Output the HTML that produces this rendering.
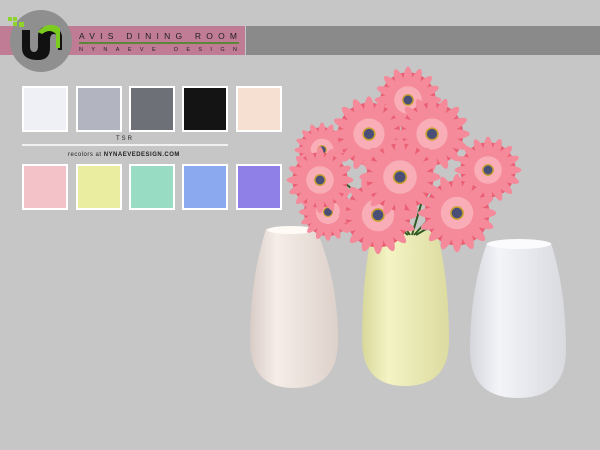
<!DOCTYPE html>
<html><head><style>
body{margin:0;width:600px;height:450px;background:#c6c6c6;overflow:hidden;position:relative;font-family:"Liberation Sans",sans-serif}
.sw{position:absolute;width:42px;height:42px;border:2px solid #fff;box-sizing:content-box}
</style></head><body>
<div style="position:absolute;left:0;top:26px;width:245px;height:29px;background:#c07c95"></div>
<div style="position:absolute;left:246px;top:26px;width:354px;height:29px;background:#8a8a8a"></div>
<svg style="position:absolute;left:0;top:0" width="600" height="450">
<defs>
<linearGradient id="g1" x1="0" x2="1"><stop offset="0" stop-color="#d8ccc6"/><stop offset=".3" stop-color="#f6ede8"/><stop offset="1" stop-color="#ddd1ca"/></linearGradient>
<linearGradient id="g2" x1="0" x2="1"><stop offset="0" stop-color="#d8d79a"/><stop offset=".3" stop-color="#f4f4c4"/><stop offset="1" stop-color="#dcdba0"/></linearGradient>
<linearGradient id="g3" x1="0" x2="1"><stop offset="0" stop-color="#d4d6dc"/><stop offset=".3" stop-color="#f3f4f8"/><stop offset="1" stop-color="#d8dadf"/></linearGradient>
<g id="d">
<circle r="24" fill="#ea5f73"/>
<g fill="#f58a9a">
<ellipse cx="0" cy="-15" rx="4" ry="14"/><ellipse cx="0" cy="-15" rx="4" ry="14" transform="rotate(22)"/><ellipse cx="0" cy="-15" rx="4" ry="14" transform="rotate(45)"/><ellipse cx="0" cy="-15" rx="4" ry="14" transform="rotate(67)"/><ellipse cx="0" cy="-15" rx="4" ry="14" transform="rotate(90)"/><ellipse cx="0" cy="-15" rx="4" ry="14" transform="rotate(112)"/><ellipse cx="0" cy="-15" rx="4" ry="14" transform="rotate(135)"/><ellipse cx="0" cy="-15" rx="4" ry="14" transform="rotate(157)"/><ellipse cx="0" cy="-15" rx="4" ry="14" transform="rotate(180)"/><ellipse cx="0" cy="-15" rx="4" ry="14" transform="rotate(202)"/><ellipse cx="0" cy="-15" rx="4" ry="14" transform="rotate(225)"/><ellipse cx="0" cy="-15" rx="4" ry="14" transform="rotate(247)"/><ellipse cx="0" cy="-15" rx="4" ry="14" transform="rotate(270)"/><ellipse cx="0" cy="-15" rx="4" ry="14" transform="rotate(292)"/><ellipse cx="0" cy="-15" rx="4" ry="14" transform="rotate(315)"/><ellipse cx="0" cy="-15" rx="4" ry="14" transform="rotate(337)"/>
</g>
<circle r="12" fill="#fbc4cc" opacity=".6"/>
<circle r="4.5" fill="#4a4f78" stroke="#c8a030" stroke-width="1.2"/>
</g>
</defs>
<circle cx="41" cy="41" r="31" fill="#8f8f8f"/>
<path d="M22 30 V48 Q22 60 38 60 Q50 60 50 48 V40 Q50 34 54 34 Q58 34 58 40 V50 H62 V36 Q60 26 50 26 Q38 26 38 36 V46 Q38 52 34 52 Q30 52 30 46 V30 Z" fill="#111"/>
<path d="M38 32 Q48 20 60 28 V48 H56 V34 Q50 28 42 34 Z" fill="#7bcc1f"/>
<rect x="8" y="17" width="4" height="4" fill="#8fd42a"/><rect x="13" y="17" width="4" height="4" fill="#8fd42a"/><rect x="13" y="22" width="4" height="4" fill="#8fd42a"/><rect x="19" y="22" width="5" height="5" fill="#8fd42a"/>
<line x1="79" y1="43" x2="239" y2="43" stroke="#3a8a1a" stroke-width="1.5"/>
<text x="79" y="39" font-size="8.5" textLength="158" lengthAdjust="spacing" fill="#222">AVIS DINING ROOM</text>
<text x="79" y="51" font-size="5.5" textLength="158" lengthAdjust="spacing" fill="#222">NYNAEVE DESIGN</text>
<line x1="22" y1="145" x2="228" y2="145" stroke="#fff" stroke-width="1.5"/>
<text x="116" y="140" font-size="6" letter-spacing="2" fill="#222">TSR</text>
<text x="68" y="156" font-size="6" letter-spacing="0.5" fill="#222">recolors at <tspan font-weight="bold">NYNAEVEDESIGN.COM</tspan></text>
<path d="M266 229 Q290 224 316 229 Q338 280 338 340 Q338 388 294 388 Q250 388 250 340 Q250 280 266 229Z" fill="url(#g1)"/>
<ellipse cx="291" cy="230" rx="24" ry="4" fill="#fffaf5"/>
<path d="M372 232 Q404 227 437 232 Q449 280 449 340 Q449 386 405 386 Q362 386 362 340 Q362 280 372 232Z" fill="url(#g2)"/>
<path d="M487 243 Q518 236 551 243 Q566 290 566 350 Q566 398 518 398 Q470 398 470 350 Q470 290 487 243Z" fill="url(#g3)"/>
<ellipse cx="519" cy="244" rx="32" ry="5" fill="#fbfbfd"/>
<g stroke="#2f5a22" stroke-width="2" fill="none">
<path d="M410 235 L370 175"/><path d="M412 235 L440 140"/><path d="M414 235 L470 175"/><path d="M408 235 L335 175"/><path d="M416 235 L458 210"/>
</g>
<use href="#d" transform="translate(328,212) scale(1)"/>
<use href="#d" transform="translate(322,150) scale(0.95)"/>
<use href="#d" transform="translate(488,170) scale(1.15)"/>
<use href="#d" transform="translate(408,100) scale(1.15)"/>
<use href="#d" transform="translate(320,180) scale(1.15)"/>
<use href="#d" transform="translate(432,134) scale(1.3)"/>
<use href="#d" transform="translate(369,134) scale(1.3)"/>
<use href="#d" transform="translate(457,213) scale(1.35)"/>
<use href="#d" transform="translate(378,215) scale(1.35)"/>
<use href="#d" transform="translate(400,177) scale(1.4)"/>
</svg>
<div class="sw" style="left:22px;top:86px;background:#eef0f6"></div>
<div class="sw" style="left:76px;top:86px;background:#b2b5bf"></div>
<div class="sw" style="left:129px;top:86px;background:#6e7077"></div>
<div class="sw" style="left:182px;top:86px;background:#141414"></div>
<div class="sw" style="left:236px;top:86px;background:#f5e0d2"></div>
<div class="sw" style="left:22px;top:164px;background:#f2c2c8"></div>
<div class="sw" style="left:76px;top:164px;background:#eaeca0"></div>
<div class="sw" style="left:129px;top:164px;background:#99dcc4"></div>
<div class="sw" style="left:182px;top:164px;background:#8aa9ef"></div>
<div class="sw" style="left:236px;top:164px;background:#8e80e6"></div>
</body></html>
